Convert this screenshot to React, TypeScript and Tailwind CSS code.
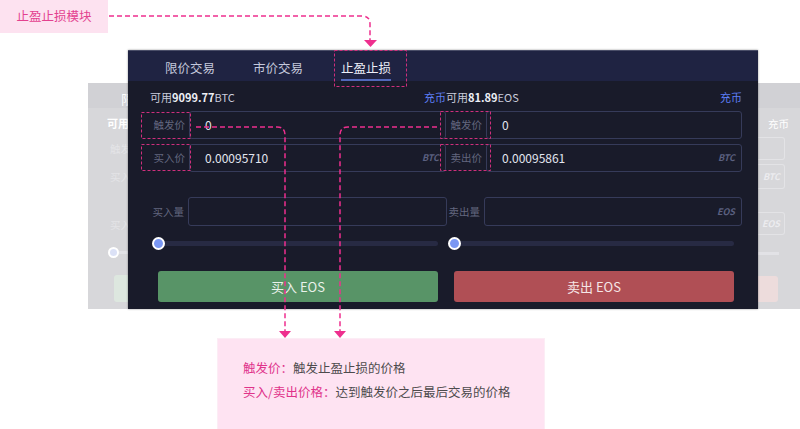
import React from 'react';

const CJK = "[font-family:'Microsoft_YaHei','Noto_Sans_CJK_SC',sans-serif]";

function Balance({ amount, unit, pad }: { amount: string; unit: string; pad?: string }) {
  return (
    <div className={`flex items-center justify-between h-[16px] text-[11px] ${pad ?? ''}`}>
      <span className="text-[#c9ccdc]">
        可用<span className="font-bold text-[#eef0f7]">{amount}</span>
        {unit}
      </span>
      <span className="text-[#5d7ef5]">充币</span>
    </div>
  );
}

function Field({ label, value, suffix, labelW }: { label: string; value?: string; suffix?: string; labelW: string }) {
  return (
    <div className="flex items-stretch h-full">
      <div className={`${labelW} shrink-0 flex items-center justify-end pr-[4px] text-[10.5px] text-[#63677f]`}>
        {label}
      </div>
      <div className="flex-1 flex items-center justify-between border border-[#363b5a] rounded-[3px] pl-[15px] pr-[6px]">
        <span className="text-[12px] text-[#e3e6f0]">{value}</span>
        {suffix && <span className="text-[9px] italic font-bold text-[#5b6080]">{suffix}</span>}
      </div>
    </div>
  );
}

function Slider() {
  return (
    <div className="relative w-[280px] h-[12px] flex items-center">
      <div className="w-full h-[5px] rounded-full bg-[#272a43]" />
      <div className="absolute -left-[6px] top-0 w-[13px] h-[13px] rounded-full bg-[#7a97f3] border-2 border-white" />
    </div>
  );
}

// faded trading form sitting behind the dark panel; only its edges show
function Backdrop() {
  return (
    <div className="absolute left-[88px] top-[83px] w-[712px] h-[226px] bg-[#d7d7da] text-white">
      <div className="h-[25px] bg-[#d1d1d5]" />
      <div className="absolute left-[33px] top-[6px] w-[7px] overflow-hidden whitespace-nowrap text-[13px]">限</div>
      <div className="absolute left-[19px] top-[32px] w-[21px] overflow-hidden whitespace-nowrap text-[11px] font-bold">可用9</div>
      <div className="absolute left-[22px] top-[58px] w-[18px] overflow-hidden whitespace-nowrap text-[10.5px] text-[#e4e4e7]">触发</div>
      <div className="absolute left-[22px] top-[86px] w-[18px] overflow-hidden whitespace-nowrap text-[10.5px] text-[#e4e4e7]">买入</div>
      <div className="absolute left-[22px] top-[134px] w-[18px] overflow-hidden whitespace-nowrap text-[10.5px] text-[#e4e4e7]">买入</div>
      <div className="absolute left-[31px] top-[168px] w-[9px] h-[3px] bg-[#e2e2e6]" />
      <div className="absolute left-[20px] top-[164px] w-[11px] h-[11px] rounded-full bg-[#dbe1f6] border-2 border-white" />
      <div className="absolute left-[26px] top-[192px] w-[14px] h-[27px] rounded-l-[3px] bg-[#dde7df]" />
      <div className="absolute left-[680px] top-[33px] text-[10.5px]">充币</div>
      <div className="absolute left-[670px] top-[54px] w-[27px] h-[23px] rounded-r-[3px] border border-l-0 border-[#e3e3e6]" />
      <div className="absolute left-[670px] top-[81px] w-[27px] h-[25px] rounded-r-[3px] border border-l-0 border-[#e3e3e6] flex items-center justify-end pr-[4px] text-[9px] italic font-bold text-[#ececef]">BTC</div>
      <div className="absolute left-[670px] top-[129px] w-[27px] h-[23px] rounded-r-[3px] border border-l-0 border-[#e3e3e6] flex items-center justify-end pr-[4px] text-[9px] italic font-bold text-[#ececef]">EOS</div>
      <div className="absolute left-[670px] top-[169px] w-[21px] h-[3px] bg-[#e2e2e6]" />
      <div className="absolute left-[670px] top-[193px] w-[20px] h-[26px] rounded-r-[3px] bg-[#eddcdc]" />
    </div>
  );
}

function Panel() {
  return (
    <div className="absolute left-[128px] top-[50px] w-[630px] h-[259px] flex flex-col shadow-[0_0_2px_rgba(0,0,0,0.4)]">
      <div className="h-[31px] shrink-0 bg-[#1f2342] border-t border-[#4a4e68] flex pl-[37px] gap-[38px] text-[12.5px]">
        <div className="pt-[8px] leading-[18px] text-[#c4c8dc]">限价交易</div>
        <div className="pt-[8px] leading-[18px] text-[#c4c8dc]">市价交易</div>
        <div className="relative pt-[8px] leading-[18px] text-[#eef0fa]">
          止盈止损
          <div className="absolute left-0 right-0 bottom-0 h-[2px] bg-[#5168ba]" />
        </div>
      </div>
      <div className="flex-1 bg-[#191b2a] pl-[13px] pr-[16px] pt-[8px]">
        <div className="flex">
          <div className="w-[305px]"><Balance amount="9099.77" unit="BTC" pad="pl-[9px]" /></div>
          <div className="flex-1"><Balance amount="81.89" unit="EOS" /></div>
        </div>
        <div className="flex mt-[6px] h-[28px]">
          <div className="w-[305px]"><Field label="触发价" value="0" labelW="w-[48px]" /></div>
          <div className="flex-1"><Field label="触发价" value="0" labelW="w-[40px]" /></div>
        </div>
        <div className="flex mt-[5px] h-[28px]">
          <div className="w-[305px]"><Field label="买入价" value="0.00095710" suffix="BTC" labelW="w-[48px]" /></div>
          <div className="flex-1"><Field label="卖出价" value="0.00095861" suffix="BTC" labelW="w-[40px]" /></div>
        </div>
        <div className="flex mt-[25px] h-[29px]">
          <div className="w-[306px]"><Field label="买入量" labelW="w-[47px]" /></div>
          <div className="flex-1"><Field label="卖出量" suffix="EOS" labelW="w-[37px]" /></div>
        </div>
        <div className="flex gap-[16px] pl-[17px] mt-[11px]">
          <Slider />
          <Slider />
        </div>
        <div className="flex gap-[16px] pl-[17px] mt-[22px]">
          <div className="w-[280px] h-[31px] rounded-[3px] bg-[#589467] flex items-center justify-center text-[13px] text-[#e9f1ea]">买入 EOS</div>
          <div className="w-[280px] h-[31px] rounded-[3px] bg-[#b04f55] flex items-center justify-center text-[13px] text-[#f6e6e7]">卖出 EOS</div>
        </div>
      </div>
    </div>
  );
}

function Annotations() {
  const pink = '#ee2f8e';
  const box = '#cf2f7c';
  return (
    <svg className="absolute inset-0 pointer-events-none" width="800" height="429" viewBox="0 0 800 429">
      <g fill="none" stroke={pink} strokeWidth="1.5" strokeDasharray="5 3">
        <path d="M109 16 H362 Q370 16 370 24 V40" />
        <path d="M196 127 H277 Q285 127 285 135 V331" />
        <path d="M437 127 H348 Q340 127 340 135 V331" />
      </g>
      <g fill={pink}>
        <polygon points="364,40 377,40 370.5,47" />
        <polygon points="279,331 291,331 285,338" />
        <polygon points="334,331 346,331 340,338" />
      </g>
      <g fill="none" stroke={box} strokeWidth="1" strokeDasharray="3 2">
        <rect x="334.5" y="50.5" width="72" height="36" />
        <rect x="141.5" y="112.5" width="49" height="26" />
        <rect x="141.5" y="144.5" width="49" height="26" />
        <rect x="440.5" y="111.5" width="50" height="27" />
        <rect x="440.5" y="144.5" width="50" height="26" />
      </g>
    </svg>
  );
}

export default function App() {
  return (
    <div className={`relative w-[800px] h-[429px] bg-white overflow-hidden ${CJK}`}>
      <div className="w-[108px] h-[33px] bg-[#fde2f0] flex items-center justify-center text-[12.5px] text-[#e3418f]">
        止盈止损模块
      </div>
      <Backdrop />
      <Panel />
      <div className="absolute left-[217px] top-[338px] w-[328px] h-[100px] bg-[#fee3f2] border border-[#fcedf5] pl-[25px] pt-[17px] text-[12.5px] leading-[24px] text-[#4d4b4d]">
        <div><span className="text-[#e0338a]">触发价：</span>触发止盈止损的价格</div>
        <div><span className="text-[#e0338a]">买入/卖出价格：</span>达到触发价之后最后交易的价格</div>
      </div>
      <Annotations />
    </div>
  );
}
